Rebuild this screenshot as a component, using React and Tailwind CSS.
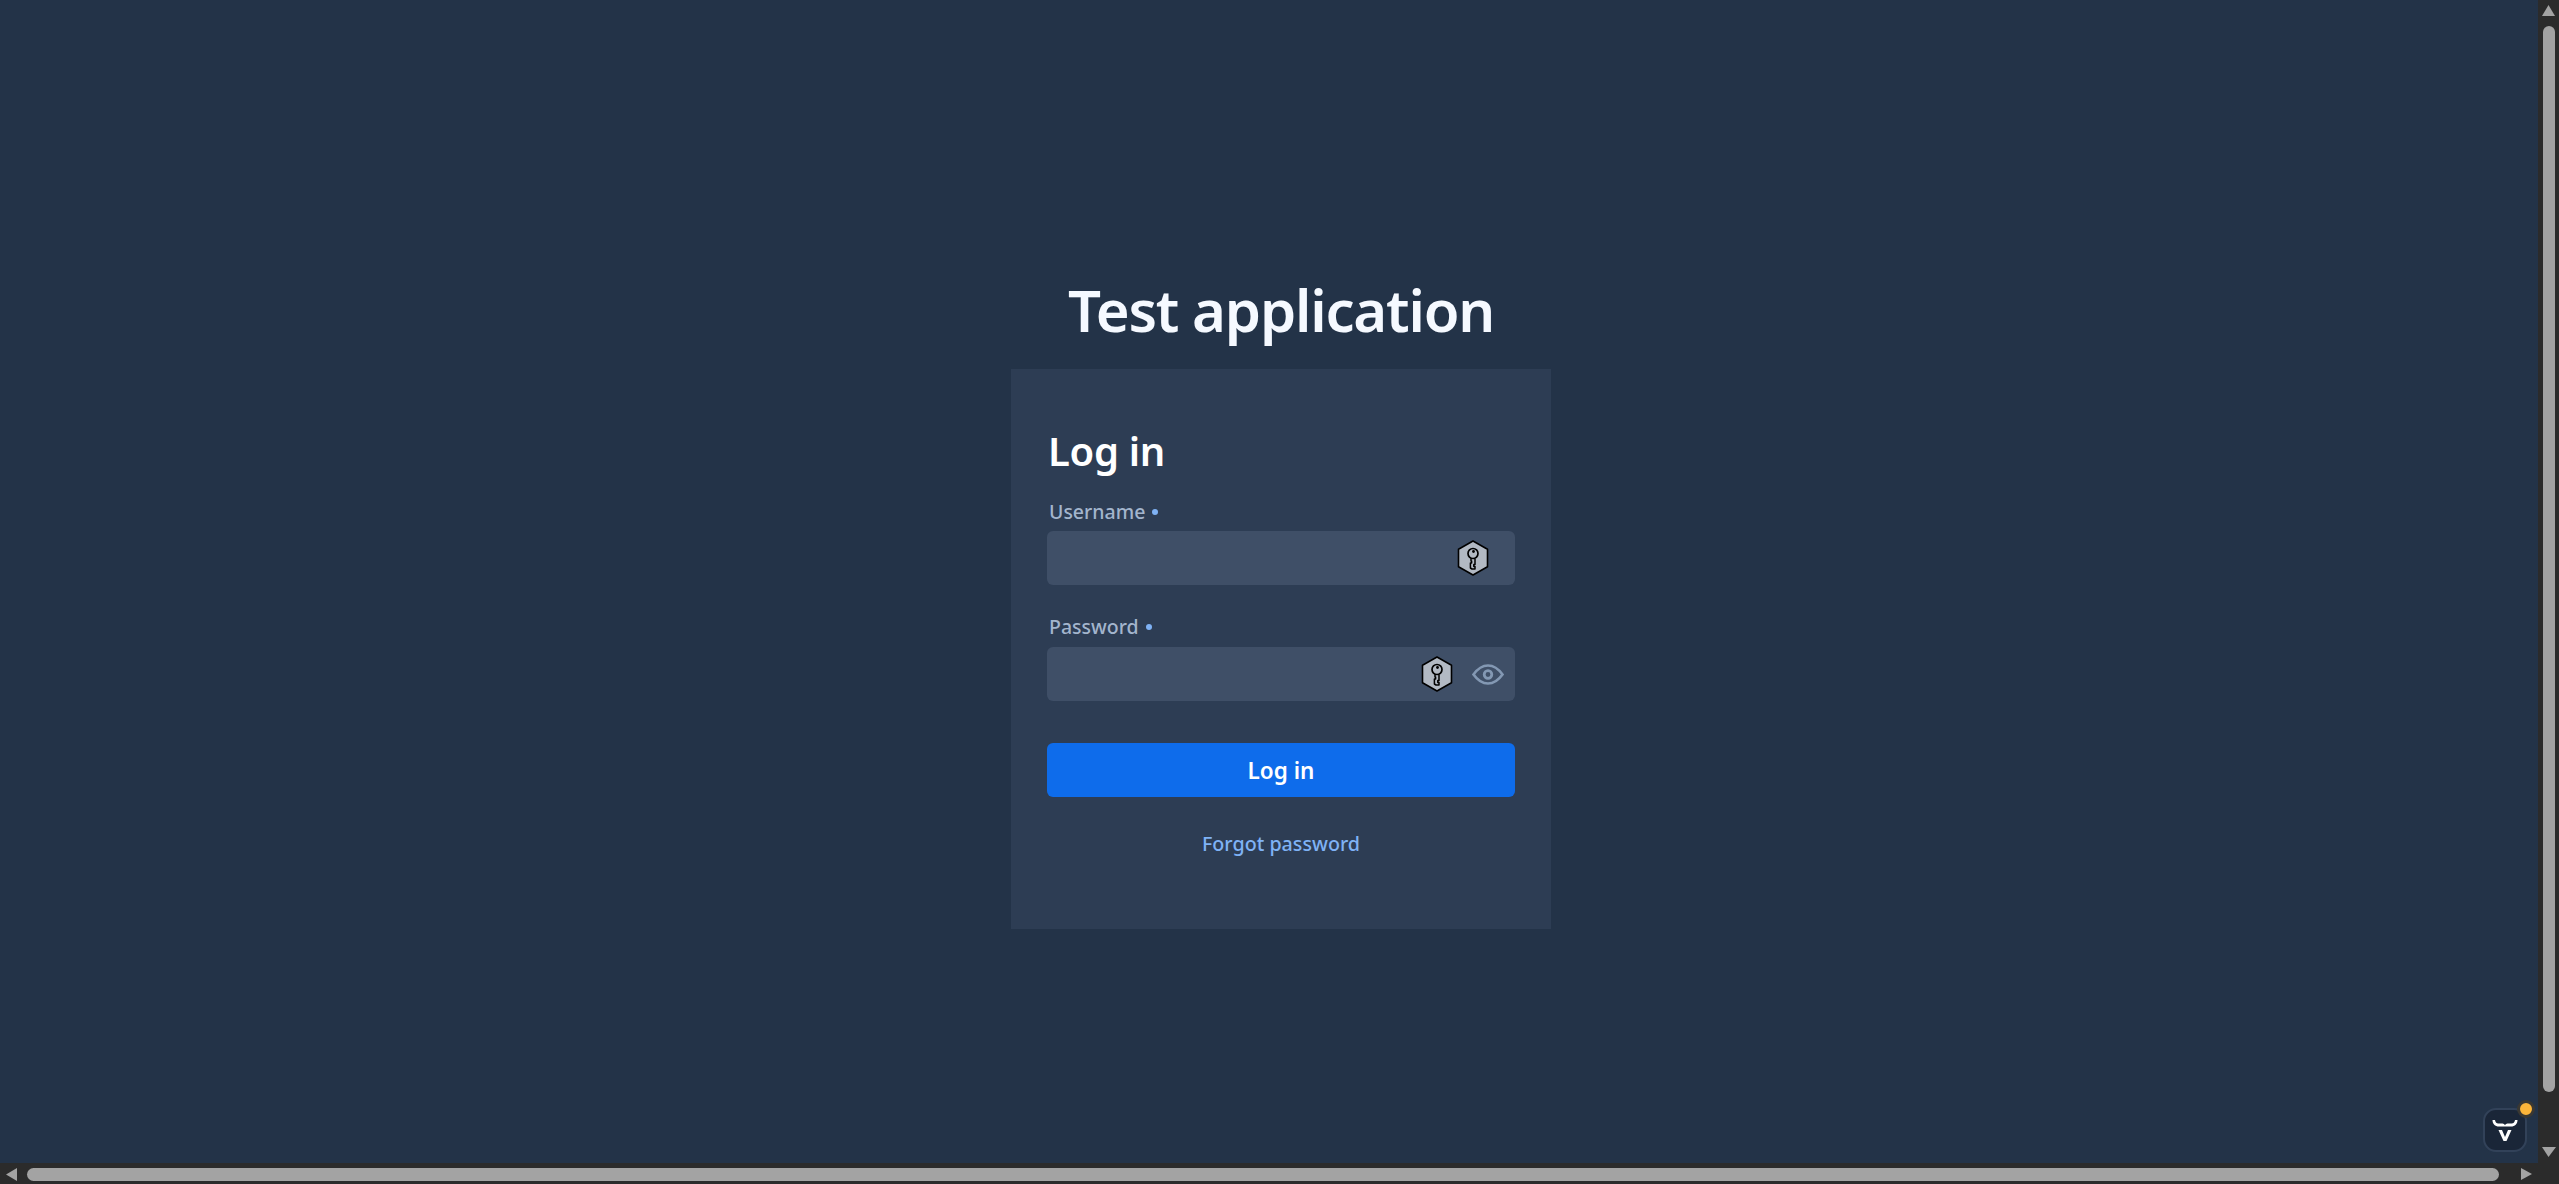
const font = { fontFamily: '"Noto Sans", "Open Sans", sans-serif' };

function KeyHex() {
  return (
    <svg width="32" height="36" viewBox="0 0 32 36" className="shrink-0">
      <path d="M16 1 L30.5 9.3 V26.7 L16 35 L1.5 26.7 V9.3 Z" fill="#b2b9c3" stroke="#000" strokeWidth="1.6" strokeLinejoin="round" />
      <circle cx="16" cy="13.5" r="5" fill="none" stroke="#000" strokeWidth="1.7" />
      <circle cx="16.5" cy="11.5" r="1.4" fill="#000" />
      <path d="M14 18.5 V21 H14.6 V23 H13.4 V28 L15 29 H18 V26.5 H16.8 V24.5 H18 V19" fill="none" stroke="#000" strokeWidth="1.5" strokeLinejoin="round" />
    </svg>
  );
}

function Eye() {
  return (
    <svg width="32" height="21" viewBox="0 0 32 21" className="shrink-0 ml-[19px]">
      <path d="M1.5 10.5 C6.5 3.5 11 1.5 16 1.5 C21 1.5 25.5 3.5 30.5 10.5 C25.5 17.5 21 19.5 16 19.5 C11 19.5 6.5 17.5 1.5 10.5 Z" fill="none" stroke="#8398b3" strokeWidth="2.6" />
      <circle cx="16" cy="10.5" r="3.8" fill="none" stroke="#8398b3" strokeWidth="2.8" />
    </svg>
  );
}

function Field({ label, children, pad, mb, labelPad }) {
  return (
    <div className={mb}>
      <div className={`flex items-center h-[30px] pl-[2px] text-[19.5px] leading-[30px] font-medium text-[#a3b5cd] ${labelPad}`}>
        <span>{label}</span>
        <span className="ml-[7px] w-[6px] h-[6px] rounded-full bg-[#7fb2f5]" />
      </div>
      <div className={`flex items-center justify-end h-[54px] mt-[4px] rounded-[6px] bg-[#3f4f67] ${pad}`}>{children}</div>
    </div>
  );
}

function Arrow({ d }) {
  return (
    <svg width="21" height="21" viewBox="0 0 21 21" className="shrink-0">
      <path d={d} fill="#a3a3a3" />
    </svg>
  );
}

export default function App() {
  return (
    <div className="flex flex-col w-screen h-screen overflow-hidden bg-[#2b2b2b]" style={font}>
      <div className="flex flex-1 min-h-0">
        <main className="relative flex-1 flex flex-col items-center bg-[#233348] pt-[270px] pl-[24px]">
          <h1 className="h-[99px] text-[58px] leading-[80px] tracking-[-1.2px] font-semibold text-[#f5f9ff]">Test application</h1>
          <section className="w-[540px] h-[560px] bg-[#2d3d54] px-[36px] pt-[54px]">
            <h2 className="h-[74px] pl-[1px] text-[40px] leading-[56px] tracking-[-0.3px] font-semibold text-white">Log in</h2>
            <Field label="Username" pad="pr-[26px]" mb="mb-[28px]" labelPad=""><KeyHex /></Field>
            <Field label="Password" pad="pr-[11px]" labelPad="pb-[3px]"><KeyHex /><Eye /></Field>
            <button className="block w-full h-[54px] mt-[42px] pt-[2px] rounded-[6px] bg-[#0e6ceb] text-white text-[22.5px] font-semibold">Log in</button>
            <a className="block mt-[32px] text-center text-[19.7px] leading-[30px] font-medium text-[#7fb2f5]">Forgot password</a>
          </section>
          <div className="absolute left-[2483px] top-[1108px] w-[44px] h-[44px] rounded-[13px] bg-[#1a2638] border-2 border-[#324259] flex items-center justify-center">
            <svg width="26" height="26" viewBox="0 0 26 26">
              <path d="M0.5 3 H3 C3.5 6 5 6.5 8 6.5 H10.5 C11.5 6.5 12.5 7.3 13 8.2 C13.5 7.3 14.5 6.5 15.5 6.5 H18 C21 6.5 22.5 6 23 3 H25.5 C25.5 7 23 9.5 19 9.5 H7 C3 9.5 0.5 7 0.5 3 Z" fill="#fff" />
              <path d="M6.5 13 H10 L13 20 L16 13 H19.5 L14.5 24 H11.5 Z" fill="#fff" />
            </svg>
            <span className="absolute left-[32px] top-[-10px] w-[18px] h-[18px] rounded-full bg-[#fcb53a] border-[3px] border-[#3a3833]" />
          </div>
        </main>
        <aside className="w-[21px] shrink-0 flex flex-col bg-[#2b2b2b]">
          <Arrow d="M10.5 5 L17 16 H4 Z" />
          <div className="flex-1 min-h-0 pl-[5px] pr-[4px] pt-[5px]">
            <div className="h-[1066px] rounded-full bg-[#a3a3a3]" />
          </div>
          <Arrow d="M10.5 15 L4 5 H18 Z" />
        </aside>
      </div>
      <footer className="h-[21px] shrink-0 flex bg-[#2b2b2b]">
        <Arrow d="M6 11.5 L17 5 V18 Z" />
        <div className="flex-1 min-w-0 pl-[6px] pr-[18px] pt-[5px] pb-[3px]">
          <div className="h-full rounded-full bg-[#a3a3a3]" />
        </div>
        <Arrow d="M15 11 L4 5 V17 Z" />
        <div className="w-[21px] shrink-0" />
      </footer>
    </div>
  );
}
